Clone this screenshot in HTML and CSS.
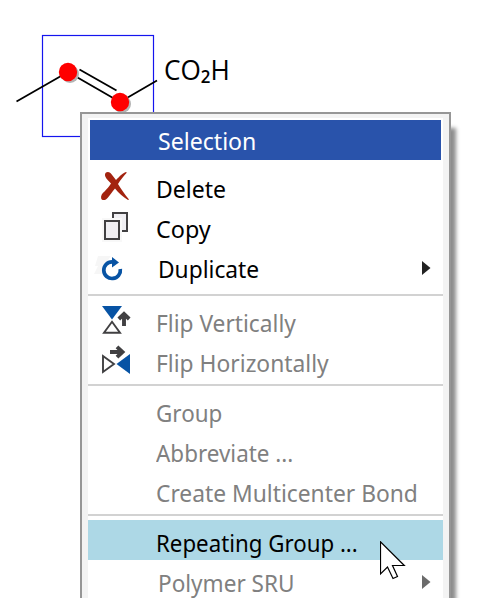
FILE: index.html
```html
<!DOCTYPE html>
<html lang="en">
<head>
<meta charset="utf-8">
<title>Structure editor</title>
<link rel="stylesheet" href="styles.css">
</head>
<body>
<main class="canvas">
  <svg class="molecule" width="250" height="140" viewBox="0 0 250 140">
    <rect x="42.5" y="35.5" width="111" height="101" fill="none" stroke="#1515ee" stroke-width="1.2"/>
    <path d="M16.5 101.5 68 72 120 102 157 80.500M79.500 69.500 116.500 90.500" fill="none" stroke="#000" stroke-width="1.8"/>
    <circle cx="70" cy="74" r="9" fill="#b4b4b4"/>
    <circle cx="122" cy="104" r="9" fill="#b4b4b4"/>
    <circle cx="68" cy="72" r="9.200" fill="#f00"/>
    <circle cx="120" cy="102" r="9.200" fill="#f00"/>
  </svg>
  <div class="label">CO<span class="sub">2</span>H</div>
  <div class="menu">
    <div class="panel">
      <div class="head"><span class="text t-selection">Selection</span></div>
      <div class="item">
        <svg class="icon" width="40" height="40" viewBox="0 0 40 40"><path d="M14 6.500C16.500 5 19 7 20.500 9.500L24 14C28 10 31 6.500 34.500 6V7C31.500 10 28.500 14 26 18C29 23 32.500 28 37 33.500L36 34C31 31 26.500 27 23 22.500C20.500 25.500 18 29 16 31.500C14 34.500 10 35 9.200 32.500C8.500 30 10 27.500 12.500 25.500C15 23 17 20.500 19 17.500C17 15 14 13 13.300 10.500C12.700 8.500 13 7.500 14 6.500Z" fill="#a3230f"/></svg>
        <span class="text t-delete">Delete</span>
      </div>
      <div class="item">
        <svg class="icon" width="40" height="40" viewBox="0 0 40 40"><g fill="#f0eff3" stroke="#414042" stroke-width="2"><path d="M21 7H35V25H21Z"/><path d="M13 15H27V33H13Z" stroke="#f8f8f8" stroke-width="6"/><path d="M13 15H27V33H13Z"/></g></svg>
        <span class="text t-copy">Copy</span>
      </div>
      <div class="item">
        <svg class="icon" width="40" height="40" viewBox="0 0 40 40"><path d="M6 10 19 10 16 14 12 21 10 28H2L6 20H3Z" fill="#f6f6f6"/><path d="M20 15.900A8.300 8.300 0 1 0 28.300 23" fill="none" stroke="#0753a4" stroke-width="3.700"/><path d="M20 11 27 16.500 20 21.500Z" fill="#0753a4"/></svg>
        <span class="text t-duplicate">Duplicate</span>
        <svg class="arrow" width="9" height="14" viewBox="0 0 9 14"><path d="M0 0 8.500 7 0 14Z" fill="#222"/></svg>
      </div>
      <hr class="sep first">
      <div class="item off">
        <svg class="icon" width="40" height="40" viewBox="0 0 40 40"><path d="M10 6H30L20 19.500Z" fill="#0753a4"/><path d="M20 21.800 28 32.700H12Z" fill="#fff" stroke="#414042" stroke-width="1.900"/><path d="M32 26V14.500M26.800 19 32 14 37.200 19" fill="none" stroke="#414042" stroke-width="3.900"/></svg>
        <span class="text t-vert">Flip Vertically</span>
      </div>
      <div class="item off">
        <svg class="icon" width="40" height="40" viewBox="0 0 40 40"><path d="M38 14V34L24.500 24Z" fill="#0753a4"/><path d="M11 16 22 24 11 32Z" fill="#fff" stroke="#414042" stroke-width="1.900"/><path d="M18 12H30M25 6.800 30.500 12 25 17.200" fill="none" stroke="#414042" stroke-width="3.900"/></svg>
        <span class="text t-horiz">Flip Horizontally</span>
      </div>
      <hr class="sep">
      <div class="item off"><span class="text t-group">Group</span></div>
      <div class="item off"><span class="text t-abbr">Abbreviate ...</span></div>
      <div class="item off"><span class="text t-bond">Create Multicenter Bond</span></div>
      <hr class="sep">
      <div class="item hover"><span class="text t-repeat">Repeating Group ...</span></div>
      <div class="item off">
        <span class="text t-polymer">Polymer SRU</span>
        <svg class="arrow" width="9" height="14" viewBox="0 0 9 14"><path d="M0 0 8.500 7 0 14Z" fill="#6b6b6b"/></svg>
      </div>
    </div>
  </div>
  <svg class="cursor" width="28" height="42" viewBox="0 0 28 42"><path d="M.5.800V33L7.500 26 13 37.500 17.500 35.500 12.500 24.500H24.300Z" fill="#fff" stroke="#000" stroke-width="1.200"/></svg>
</main>
</body>
</html>
```
FILE: styles.css
```css
* { box-sizing: border-box; }
body { margin: 0; background: #fff; overflow: hidden; }
.canvas {
  position: relative;
  height: 598px;
  padding: 112px 0 0 80px;
  overflow: hidden;
  font-family: "Noto Sans", sans-serif;
}
.molecule { position: absolute; left: 0; top: 0; }
.label {
  position: absolute;
  left: 164px;
  top: 51px;
  font: 28px/36px "Open Sans", sans-serif;
  white-space: nowrap;
  transform: scaleX(.935);
  transform-origin: left;
}
.sub { font-size: 18px; font-weight: 600; position: relative; top: 3px; }
.menu {
  position: relative;
  width: 371px;
  height: 520px;
  padding: 4px 6px;
  background: #f3f3f3;
  border: 2px solid #969696;
  box-shadow: 5px 16px 4px 0 rgba(0, 0, 0, .45);
}
.panel { height: 100%; padding-top: 2px; background: #fff; }
.head {
  height: 40px;
  margin: 0 2px 6px;
  padding: 4px 0 0 68px;
  background: #2953ab;
  color: #fff;
  font-size: 24px;
  line-height: 34px;
}
.item {
  position: relative;
  display: flex;
  height: 40px;
  padding: 6px 0 0 68px;
  color: #000;
  font-size: 24px;
  line-height: 34px;
  white-space: nowrap;
}
.text { display: inline-block; height: 34px; transform-origin: left; }
.t-selection { transform: scaleX(.963); }
.t-delete { transform: scaleX(.958); }
.t-copy { transform: scaleX(.975); }
.t-duplicate { margin-left: 2px; transform: scaleX(.948); }
.t-vert { transform: scaleX(.947); }
.t-horiz { transform: scaleX(.951); }
.t-group { transform: scaleX(.935); }
.t-abbr { transform: scaleX(.935); }
.t-bond { transform: scaleX(.95); }
.t-repeat { transform: scaleX(.928); }
.t-polymer { margin-left: 2px; transform: scaleX(.94); }
.off { color: #808080; }
.hover { background: #add8e6; }
.icon { position: absolute; left: 4px; top: 0; }
.arrow { position: absolute; right: 12px; top: 15px; }
.sep { height: 2px; margin: 4px 0; border: 0; background: #d2d2d2; }
.sep.first { margin-top: 8px; }
.cursor { position: absolute; left: 380px; top: 541px; }
```
